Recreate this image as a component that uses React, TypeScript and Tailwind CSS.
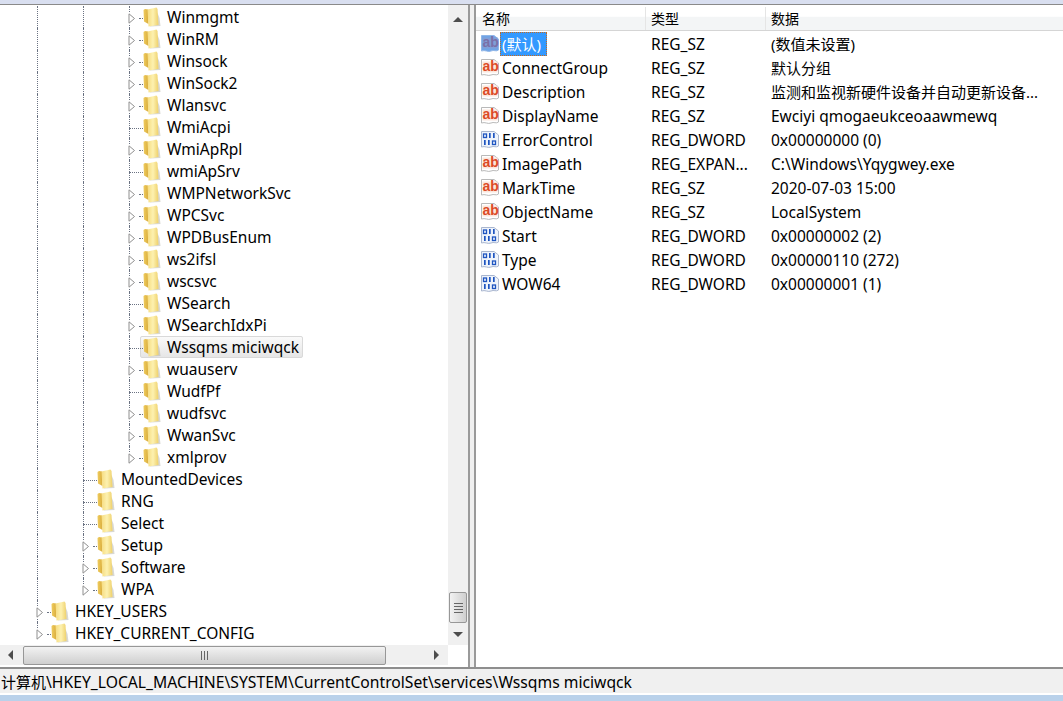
import React from 'react';

const FONT = "font-['Noto_Sans','Noto_Sans_CJK_SC',sans-serif]";

type TreeItem = { name: string; level: number; expandable: boolean; selected?: boolean; last?: boolean };

const lvl2: [string, boolean][] = [
  ['Winmgmt', true], ['WinRM', true], ['Winsock', true], ['WinSock2', true], ['Wlansvc', true],
  ['WmiAcpi', false], ['WmiApRpl', true], ['wmiApSrv', false], ['WMPNetworkSvc', true], ['WPCSvc', true],
  ['WPDBusEnum', true], ['ws2ifsl', true], ['wscsvc', true], ['WSearch', false], ['WSearchIdxPi', true],
  ['Wssqms miciwqck', false], ['wuauserv', true], ['WudfPf', false], ['wudfsvc', true], ['WwanSvc', true], ['xmlprov', true],
];

const treeItems: TreeItem[] = [
  ...lvl2.map(([name, expandable]) => ({
    name, expandable, level: 2, selected: name === 'Wssqms miciwqck', last: name === 'xmlprov',
  })),
  { name: 'MountedDevices', level: 1, expandable: false },
  { name: 'RNG', level: 1, expandable: false },
  { name: 'Select', level: 1, expandable: false },
  { name: 'Setup', level: 1, expandable: true },
  { name: 'Software', level: 1, expandable: true },
  { name: 'WPA', level: 1, expandable: true, last: true },
  { name: 'HKEY_USERS', level: 0, expandable: true },
  { name: 'HKEY_CURRENT_CONFIG', level: 0, expandable: true, last: true },
];

const values = [
  { name: '(默认)', type: 'REG_SZ', data: '(数值未设置)', kind: 'ab', selected: true, cjk: true },
  { name: 'ConnectGroup', type: 'REG_SZ', data: '默认分组', kind: 'ab', cjk: true },
  { name: 'Description', type: 'REG_SZ', data: '监测和监视新硬件设备并自动更新设备...', kind: 'ab', cjk: true },
  { name: 'DisplayName', type: 'REG_SZ', data: 'Ewciyi qmogaeukceoaawmewq', kind: 'ab' },
  { name: 'ErrorControl', type: 'REG_DWORD', data: '0x00000000 (0)', kind: 'bin' },
  { name: 'ImagePath', type: 'REG_EXPAN...', data: 'C:\\Windows\\Yqygwey.exe', kind: 'ab' },
  { name: 'MarkTime', type: 'REG_SZ', data: '2020-07-03 15:00', kind: 'ab' },
  { name: 'ObjectName', type: 'REG_SZ', data: 'LocalSystem', kind: 'ab' },
  { name: 'Start', type: 'REG_DWORD', data: '0x00000002 (2)', kind: 'bin' },
  { name: 'Type', type: 'REG_DWORD', data: '0x00000110 (272)', kind: 'bin' },
  { name: 'WOW64', type: 'REG_DWORD', data: '0x00000001 (1)', kind: 'bin' },
];

const Folder = () => (
  <svg width="20" height="20" viewBox="0 0 20 20" className="shrink-0">
    <defs>
      <linearGradient id="page" x1="0" y1="0" x2="1" y2="0">
        <stop offset="0" stopColor="#f6dc80" />
        <stop offset="0.5" stopColor="#fdf1b0" />
        <stop offset="1" stopColor="#eed06a" />
      </linearGradient>
      <linearGradient id="band" x1="0" y1="0" x2="1" y2="0">
        <stop offset="0" stopColor="#f0cc5e" />
        <stop offset="1" stopColor="#d8ac3c" />
      </linearGradient>
    </defs>
    <path d="M7 19.5 L17.5 19 L16.5 11 L14.5 6 Z" fill="#a8a8a0" opacity="0.45" />
    <path d="M0.5 3 L2 2 L5 2.5 L5.5 17 L1 14.5 Z" fill="url(#band)" />
    <path d="M4.5 2.5 L13.5 0.5 L14.5 2 L15.5 18 L5.5 19.5 Z" fill="url(#page)" />
  </svg>
);

const Triangle = () => (
  <svg width="8" height="11" viewBox="0 0 8 11" className="absolute left-[-1px] top-[7px] bg-white">
    <path d="M1 0.8 L6.5 5.5 L1 10.2 Z" fill="#fff" stroke="#8f8f8f" />
  </svg>
);

const TreeRow = ({ item }: { item: TreeItem }) => (
  <div className="flex h-[22px] items-stretch pl-[37px]">
    {Array.from({ length: item.level }).map((_, i) => (
      <div key={i} className="w-[46px] shrink-0 border-l border-dotted border-gray-500" />
    ))}
    <div className="relative w-[14px] shrink-0">
      <div className={`absolute left-0 top-0 border-l border-dotted border-gray-500 ${item.last ? 'h-[12px]' : 'h-full'}`} />
      <div
        className={`absolute top-[12px] right-0 border-t border-dotted border-gray-500 ${item.expandable ? 'w-[4px]' : 'w-full'}`}
      />
      {item.expandable && <Triangle />}
    </div>
    <div
      className={`flex items-center h-[22px] pr-[3px] whitespace-nowrap border ${
        item.selected
          ? 'border-[#d9d9d9] rounded-[2px] bg-gradient-to-b from-[#fafafa] to-[#e6e6e6] ml-[-3px] pl-[2px]'
          : 'border-transparent ml-[-1px]'
      }`}
    >
      <Folder />
      <span className="ml-[4px] pt-[2px] text-[15.5px] text-black">{item.name}</span>
    </div>
  </div>
);

const Arrow = ({ dir }: { dir: 'up' | 'down' | 'left' | 'right' }) => {
  const d = { up: 'M0 6 L5 1 L10 6 Z', down: 'M0 1 L10 1 L5 6 Z', left: 'M6 0 L1 5 L6 10 Z', right: 'M1 0 L6 5 L1 10 Z' }[dir];
  const w = dir === 'up' || dir === 'down' ? 10 : 7;
  const h = dir === 'up' || dir === 'down' ? 7 : 10;
  return (
    <svg width={w} height={h} viewBox={`0 0 ${w} ${h}`}>
      <path d={d} fill="#4d4d4d" />
    </svg>
  );
};

const RegIcon = ({ kind, selected }: { kind: string; selected?: boolean }) => (
  <svg width="20" height="20" viewBox="0 0 20 20" className="shrink-0">
    <path
      d="M1.5 1.5 L14 1.5 L18.5 5 L18.5 16 C16 18 14 15.5 11 17 C8 18.5 5 15.5 1.5 17 Z"
      fill={selected ? '#6fa4e6' : kind === 'bin' ? '#eef3fb' : '#fff'}
      stroke={selected ? '#8fb6e8' : kind === 'bin' ? '#a9b6cf' : '#b9b9b9'}
    />
    {kind === 'ab' ? (
      <>
        <rect x="2.5" y="3.5" width="15" height="11" fill={selected ? '#7f9fd8' : '#fbe6dc'} />
        <text
          x="2.5"
          y="13"
          fontSize="14"
          fontWeight="700"
          fontFamily="Liberation Sans, sans-serif"
          fill={selected ? '#7a70a8' : '#dc4a26'}
        >
          ab
        </text>
      </>
    ) : (
      <>
        <rect x="3.5" y="4" width="3" height="3.5" fill="none" stroke="#1f55c0" strokeWidth="1.3" />
        <rect x="9" y="3" width="1.7" height="5" fill="#1f55c0" />
        <rect x="13" y="3" width="1.7" height="5" fill="#1f55c0" />
        <rect x="4" y="10" width="1.7" height="5" fill="#1f55c0" />
        <rect x="8" y="10" width="1.7" height="5" fill="#1f55c0" />
        <rect x="12.5" y="11" width="3" height="3.5" fill="none" stroke="#1f55c0" strokeWidth="1.3" />
      </>
    )}
  </svg>
);

const App = () => {
  return (
    <div className={`flex h-[701px] w-[1063px] flex-col overflow-hidden bg-[#f0f0f0] ${FONT}`}>
      <div className="h-[4px] shrink-0 bg-[#d9dff0]" />
      <div className="flex min-h-0 flex-1 border-t border-[#8a8a8a]">
        {/* tree pane */}
        <div className="flex w-[470px] shrink-0 border-r-2 border-[#9a9a9a] bg-white">
          <div className="flex min-w-0 w-[448px] flex-col">
            <div className="min-h-0 flex-1 overflow-hidden pt-[1px]">
              {treeItems.map((item) => (
                <TreeRow key={item.name} item={item} />
              ))}
            </div>
            <div className="mb-[2px] flex h-[20px] shrink-0 items-center bg-[#f0f0f0]">
              <div className="flex w-[23px] justify-center pr-[3px]"><Arrow dir="left" /></div>
              <div className="flex h-[19px] w-[363px] items-center justify-center rounded-[2px] border border-[#979797] bg-gradient-to-b from-[#f2f2f2] to-[#cfcfcf]">
                <div className="flex gap-[2px]">
                  <div className="h-[9px] w-px bg-[#666]" />
                  <div className="h-[9px] w-px bg-[#666]" />
                  <div className="h-[9px] w-px bg-[#666]" />
                </div>
              </div>
              <div className="flex flex-1 justify-end pr-[8px]"><Arrow dir="right" /></div>
            </div>
          </div>
          <div className="flex w-[20px] shrink-0 flex-col pb-[22px]">
            <div className="flex flex-1 flex-col items-center bg-[#f0f0f0] pt-[11px]">
              <Arrow dir="up" />
              <div className="flex-1" />
              <div className="flex h-[31px] w-[18px] flex-col items-center justify-center gap-[2px] rounded-[2px] border border-[#979797] bg-gradient-to-r from-[#f2f2f2] to-[#cfcfcf]">
                <div className="h-px w-[9px] bg-[#666]" />
                <div className="h-px w-[9px] bg-[#666]" />
                <div className="h-px w-[9px] bg-[#666]" />
                <div className="h-px w-[9px] bg-[#666]" />
              </div>
              <div className="flex h-[22px] items-center"><Arrow dir="down" /></div>
            </div>
          </div>
        </div>
        <div className="w-[4px] shrink-0 bg-[#f0f0f0]" />
        {/* values pane */}
        <div className="min-w-0 flex-1 border-l-2 border-[#9a9a9a] bg-white">
          <div className="flex h-[26px] items-center border-b border-[#d5d5d5] bg-[linear-gradient(to_bottom,#ffffff_45%,#f3f5f6_50%)] pt-[2px] text-[14px] text-black">
            <div className="flex h-full w-[170px] items-center border-r border-[#e5e5e5] pl-[6px]">名称</div>
            <div className="flex h-full w-[120px] items-center border-r border-[#e5e5e5] pl-[5px]">类型</div>
            <div className="flex h-full items-center pl-[5px]">数据</div>
          </div>
          <div className="pt-[1px]">
            {values.map((v) => (
              <div key={v.name} className="flex h-[24px] items-center whitespace-nowrap text-[15.5px] text-black">
                <div className="flex w-[170px] shrink-0 items-center pl-[4px]">
                  <RegIcon kind={v.kind} selected={v.selected} />
                  <span
                    className={`flex h-[24px] items-center ${
                      v.selected
                        ? 'bg-[#3399ff] pl-[2px] pr-[6px] text-[15px] text-white outline-1 outline-dotted outline-[#c96a1c] -outline-offset-1'
                        : 'pl-[2px] pt-[2px]'
                    }`}
                  >
                    {v.name}
                  </span>
                </div>
                <div className="w-[120px] shrink-0 pl-[5px] pt-[2px]">{v.type}</div>
                <div className={`pl-[5px] ${v.cjk ? 'text-[15px]' : 'pt-[2px]'}`}>{v.data}</div>
              </div>
            ))}
          </div>
        </div>
      </div>
      <div className="flex h-[26px] shrink-0 items-center border-t-2 border-[#8e8e8e] bg-[#f0f0f0] pt-[3px] text-[15.7px] text-black">
        <span className="whitespace-nowrap pl-[1px]">
          <span className="text-[15px]">计算机</span>\HKEY_LOCAL_MACHINE\SYSTEM\CurrentControlSet\services\Wssqms miciwqck
        </span>
      </div>
      <div className="h-[2px] shrink-0 bg-white" />
      <div className="h-[6px] shrink-0 bg-[#b9d1ea]" />
    </div>
  );
};

export default App;
